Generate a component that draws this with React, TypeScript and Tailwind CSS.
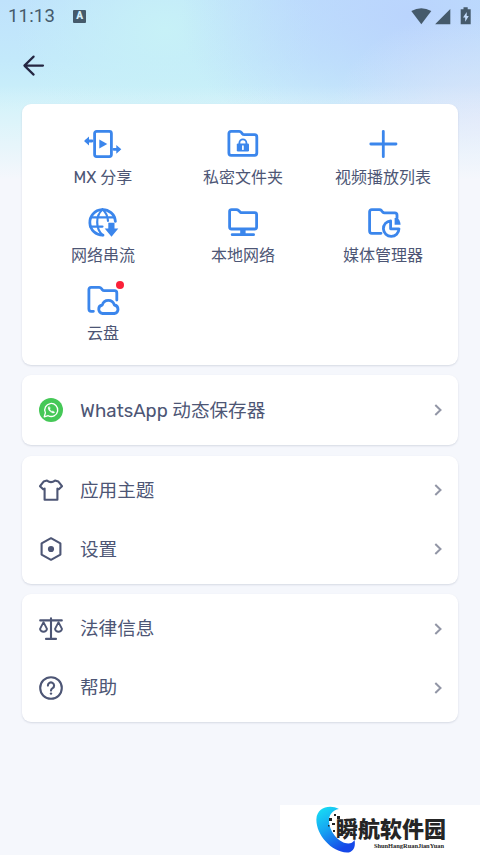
import type { ReactNode } from 'react'

type Shortcut = {
  label: string
  icon: ReactNode
  badge?: boolean
}

type MenuItem = {
  label: string
  icon: ReactNode
}

const FOLDER = 'M5.9 25V5.6Q5.9 3.4 8.1 3.4H16.2Q17.6 3.4 18.4 4.5L19.2 5.6Q20 6.7 21.4 6.7H31.6Q33.8 6.7 33.8 8.9'

const shortcuts: Shortcut[] = [
  {
    label: 'MX 分享',
    icon: (
      <>
        <rect x="11.6" y="3.4" width="16.8" height="25.2" rx="2" />
        <path d="M16.3 11.6V20.6L24.3 16.1Z" fill="currentColor" stroke="none" />
        <path d="M9 13H3.5M30.8 21.3H35.8" />
        <path d="M6 8.6V17.4L1 13ZM33.3 16.9V25.7L38.3 21.3Z" fill="currentColor" stroke="none" />
      </>
    ),
  },
  {
    label: '私密文件夹',
    icon: (
      <>
        <path d={`${FOLDER}V25.1Q33.8 27.3 31.6 27.3H8.1Q5.9 27.3 5.9 25`} />
        <path d="M16.4 16V14.8A3.5 3.5 0 0 1 23.4 14.8V16" strokeWidth="1.8" />
        <rect x="13.8" y="15.4" width="12.2" height="8" rx="1.2" fill="currentColor" stroke="none" />
        <path d="M19.9 18V21.2" stroke="white" strokeWidth="1.7" />
      </>
    ),
  },
  {
    label: '视频播放列表',
    icon: <path d="M20.3 3.3V28.7M7.8 16H33" />,
  },
  {
    label: '网络串流',
    icon: (
      <>
        <path d="M32.4 15.3A12.8 12.8 0 1 0 20 29.2" />
        <path d="M19.6 3.5C16 6.5 14.2 11 14.2 16.3S16 26 19.6 29.1M19.6 3.5C22.8 6.2 24.6 10 25 14.8M8 11.3H31.4M7.2 20.6H19.5" strokeWidth="2.2" />
        <path d="M25.3 16.8H31.5V22.6H35.3L28.5 30.7L21.7 22.6H25.3Z" fill="currentColor" stroke="none" />
      </>
    ),
  },
  {
    label: '本地网络',
    icon: (
      <>
        <path d="M6.6 21V5.6Q6.6 3.6 8.6 3.6H13.4Q14.6 3.6 15.6 4.6L17.6 6.6H31.6Q33.6 6.6 33.6 8.6V21Q33.6 23 31.6 23H8.6Q6.6 23 6.6 21Z" />
        <path d="M9.2 28.7H30.6" />
        <path d="M17.2 23H22.6V28H17.2Z" fill="currentColor" stroke="none" />
      </>
    ),
  },
  {
    label: '媒体管理器',
    icon: (
      <>
        <path d="M18 27.3H8.8Q6.6 27.3 6.6 25V5.8Q6.6 3.6 8.8 3.6H16.4Q17.6 3.6 18.4 4.5L19.6 6Q20.4 6.8 21.6 6.8H31.8Q34 6.8 34 9V12" />
        <path d="M27.6 14.8A7.8 7.8 0 1 0 36 22.8H27.6Z" />
        <path d="M31.6 12V18.8H37.6Q37.2 14 34.5 12Z" fill="currentColor" stroke="none" />
      </>
    ),
  },
  {
    label: '云盘',
    badge: true,
    icon: (
      <>
        <path d={`${FOLDER}V16M10.4 27.3H8.1Q5.9 27.3 5.9 25`} />
        <path d="M19.5 29.5A4.3 4.3 0 0 1 19.3 21A6.2 6.2 0 0 1 31.3 21A4.3 4.3 0 0 1 31.4 29.5Z" />
      </>
    ),
  },
]

const whatsapp: MenuItem = {
  label: 'WhatsApp 动态保存器',
  icon: (
    <>
      <circle cx="13" cy="13" r="12" fill="#45c857" stroke="none" />
      <path d="M6.2 19.9L7.4 15.8A6.5 6.5 0 1 1 10.2 18.7Z" stroke="white" strokeWidth="1.3" />
      <path d="M10.9 9.4C9.3 10.4 10.4 13 12.2 14.5S15.8 16.7 16.7 15.2L14.9 13.9L13.9 14.4Q12.4 13.8 11.7 12.2L12.2 11.3Z" fill="white" stroke="white" strokeWidth="0.4" />
    </>
  ),
}

const appearance: MenuItem[] = [
  {
    label: '应用主题',
    icon: <path d="M9 3.6Q13 6.7 17 3.6L20.4 4.6L24 9.2L20.8 12.3L19.4 11.6V22.8H6.6V11.6L5.2 12.3L2 9.2L5.6 4.6Z" />,
  },
  {
    label: '设置',
    icon: (
      <>
        <path d="M13 2.2L22.4 7.4V18.6L13 23.8L3.6 18.6V7.4Z" />
        <circle cx="13" cy="13" r="3.1" fill="currentColor" stroke="none" />
      </>
    ),
  },
]

const about: MenuItem[] = [
  {
    label: '法律信息',
    icon: (
      <>
        <path d="M13 2.2V22.5M8 22.9H18M2.2 4.4H23.8" />
        <path d="M5.5 6.2L2 13A3.6 3.6 0 0 0 9 13ZM20.5 6.2L17 13A3.6 3.6 0 0 0 24 13Z" strokeWidth="1.8" />
      </>
    ),
  },
  {
    label: '帮助',
    icon: (
      <>
        <circle cx="13" cy="13" r="10.8" />
        <path d="M9.9 10.6A3.1 3.1 0 1 1 14.6 13.2Q13 14.1 13 15.6" />
        <circle cx="13" cy="18.6" r="1.2" fill="currentColor" stroke="none" />
      </>
    ),
  },
]

function StatusBar() {
  return (
    <div className="flex h-8 items-center pl-2 pr-2 text-[#455a6b]">
      <span className="pt-px font-[Roboto,sans-serif] text-[18.5px] leading-[31px] tracking-[0.2px]">11:13</span>
      <span className="ml-[18px] flex h-[13px] w-[13px] items-center justify-center rounded-[1px] bg-[#455a6b] font-[Roboto,sans-serif] text-[10px] font-black leading-none text-[#d5effb]">
        A
      </span>
      <svg className="ml-auto h-[18px] w-[62px]" viewBox="0 0 62 18" fill="currentColor">
        <path d="M1.3 4Q11.3 -1.6 21.3 4L11.3 17.3Z" />
        <path d="M40.3 2V17.3H25.1Z" />
        <path d="M50.7 2.2H53.5V0.2H57.7V2.2H60.7V17.3H50.7Z" />
        <path d="M56.7 5L53 10.5H55.2V14.8L58.8 9H56.7Z" fill="#c4dcfb" />
      </svg>
    </div>
  )
}

function ShortcutButton({ label, icon, badge }: Shortcut) {
  return (
    <button className="flex h-[78px] flex-col items-center">
      <span className="relative h-8 w-10">
        <svg
          className="h-8 w-10 text-[#3b86ec]"
          viewBox="0 0 40 32"
          fill="none"
          stroke="currentColor"
          strokeWidth="2.8"
          strokeLinecap="round"
          strokeLinejoin="round"
        >
          {icon}
        </svg>
        {badge && <span className="absolute -right-px -top-[3px] h-2 w-2 rounded-full bg-[#fb2038]" />}
      </span>
      <span className="mt-1.5 whitespace-nowrap text-[16px] leading-6">{label}</span>
    </button>
  )
}

function MenuRow({ label, icon }: MenuItem) {
  return (
    <button className="flex h-[59px] w-full items-center pl-4 pr-[15px] text-left">
      <svg
        className="-ml-[0.5px] h-[26px] w-[26px]"
        viewBox="0 0 26 26"
        fill="none"
        stroke="currentColor"
        strokeWidth="2.1"
        strokeLinecap="round"
        strokeLinejoin="round"
      >
        {icon}
      </svg>
      <span className="ml-[16.5px] pt-px text-[18.6px] leading-7">{label}</span>
      <svg className="ml-auto h-3 w-[10px] text-[#9296a6]" viewBox="0 0 10 12" fill="none" stroke="currentColor" strokeWidth="2">
        <path d="M2.3 1L7.5 6L2.3 11" />
      </svg>
    </button>
  )
}

function Card({ children, className = '' }: { children: ReactNode; className?: string }) {
  return (
    <section className={`rounded-[9px] bg-white shadow-[0_1px_2px_rgba(70,85,115,0.18)] ${className}`}>
      {children}
    </section>
  )
}

function Watermark() {
  return (
    <div className="flex h-[50px] w-[200px] self-end bg-white">
      <svg className="ml-[34px] h-[50px] w-[42px]" viewBox="0 0 42 50">
        <defs>
          <linearGradient id="swoosh" x1="0" y1="0" x2="0.5" y2="1">
            <stop offset="0" stopColor="#18e4f4" />
            <stop offset="0.5" stopColor="#16a4f2" />
            <stop offset="1" stopColor="#1648e8" />
          </linearGradient>
        </defs>
        <path d="M25 4C15 -1 3 3 2.4 14C1.7 29 17 47 33 47.5C39 47.5 42 42 40.5 35C37 41 28 39 21 31C12 20 13 6 25 4Z" fill="url(#swoosh)" />
        <path d="M20 9H22V11H20ZM15 13H18V16H15ZM23 11H26V14H23ZM18 18H21V20H18ZM14 20H15.5V21.5H14ZM19 25H21V27H19Z" fill="#222" />
      </svg>
      <div className="-ml-[20px] flex flex-col text-[#252525]">
        <span className="mt-[12px] whitespace-nowrap text-[22px] font-black leading-[25px]">瞬航软件园</span>
        <span className="mr-[2px] self-end whitespace-nowrap font-['Liberation_Serif',serif] text-[6.4px] font-bold leading-[8px]">
          ShunHangRuanJianYuan
        </span>
      </div>
    </div>
  )
}

export default function App() {
  return (
    <div className="flex h-[855px] w-[480px] flex-col overflow-hidden bg-[#f5f7fc] bg-[linear-gradient(180deg,transparent_85px,#f5f7fc_180px),radial-gradient(ellipse_150px_110px_at_480px_120px,#d9e4fa,transparent),radial-gradient(ellipse_230px_150px_at_410px_15px,#bad4fd,transparent),radial-gradient(ellipse_150px_120px_at_165px_30px,#c7f1f7,transparent),linear-gradient(180deg,#bfe2fc,#c3e9fb_60px,#cdf2f9_110px)] font-[Rubik,Roboto,'Noto_Sans_CJK_SC',sans-serif] text-[#4d5675]">
      <StatusBar />
      <header className="flex h-[72px] items-start pl-[22px] pt-[22px]">
        <button aria-label="返回">
          <svg className="h-6 w-6 text-[#242642]" viewBox="0 0 24 24" fill="none" stroke="currentColor" strokeWidth="2.2" strokeLinecap="round" strokeLinejoin="round">
            <path d="M21 11.6H2.4M11.6 2.6L2.4 11.6L11.6 20.6" />
          </svg>
        </button>
      </header>

      <main className="flex flex-col gap-[10.5px] px-[22px]">
        <Card className="grid h-[260.5px] grid-cols-3 content-start pl-[11px] pr-[5px] pt-6">
          {shortcuts.map((s) => (
            <ShortcutButton key={s.label} {...s} />
          ))}
        </Card>
        <Card className="py-[5.5px]">
          <MenuRow {...whatsapp} />
        </Card>
        <Card className="py-[5px]">
          {appearance.map((item) => (
            <MenuRow key={item.label} {...item} />
          ))}
        </Card>
        <Card className="py-[5px]">
          {about.map((item) => (
            <MenuRow key={item.label} {...item} />
          ))}
        </Card>
      </main>

      <div className="mt-auto flex flex-col">
        <Watermark />
      </div>
    </div>
  )
}
